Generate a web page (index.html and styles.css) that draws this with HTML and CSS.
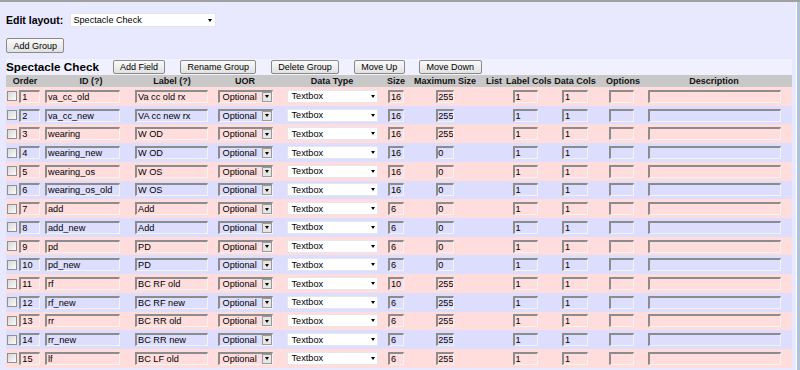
FILE: index.html
```html
<!DOCTYPE html>
<html>
<head>
<meta charset="utf-8">
<title>Edit layout</title>
<link rel="stylesheet" href="styles.css">
</head>
<body>
<div class="page">
  <div class="layout-row">
    <span class="layout-label">Edit layout:</span>
    <div class="top-select">Spectacle Check<span class="caret"></span></div>
  </div>
  <div class="add-group-row"><button class="btn">Add Group</button></div>
  <div class="group-bar">
    <span class="group-title">Spectacle Check</span>
    <button class="btn first">Add Field</button>
    <button class="btn">Rename Group</button>
    <button class="btn">Delete Group</button>
    <button class="btn">Move Up</button>
    <button class="btn">Move Down</button>
  </div>
  <table class="fields">
    <colgroup>
      <col class="c-order"><col class="c-id"><col class="c-label"><col class="c-uor"><col class="c-type"><col class="c-size"><col class="c-max"><col class="c-list"><col class="c-lc"><col class="c-dc"><col class="c-opt"><col class="c-desc">
    </colgroup>
    <thead>
      <tr><th>Order</th><th class="h-id">ID (?)</th><th>Label (?)</th><th>UOR</th><th>Data Type</th><th>Size</th><th>Maximum Size</th><th>List</th><th>Label Cols</th><th>Data Cols</th><th>Options</th><th>Description</th></tr>
    </thead>
    <tbody>
      <tr><td><div class="ord"><input type="checkbox" class="chk"><input class="in w-order" value="1"></div></td><td class="left"><input class="in w-id" value="va_cc_old"></td><td class="left"><input class="in w-label" value="Va cc old rx"></td><td><div class="uor">Optional<span class="abtn"></span></div></td><td><div class="dtype">Textbox<span class="caret"></span></div></td><td><input class="in w-size" value="16"></td><td><input class="in w-max" value="255"></td><td></td><td><input class="in w-lc" value="1"></td><td><input class="in w-dc" value="1"></td><td><input class="in w-opt" value=""></td><td><input class="in w-desc" value=""></td></tr>
      <tr><td><div class="ord"><input type="checkbox" class="chk"><input class="in w-order" value="2"></div></td><td class="left"><input class="in w-id" value="va_cc_new"></td><td class="left"><input class="in w-label" value="VA cc new rx"></td><td><div class="uor">Optional<span class="abtn"></span></div></td><td><div class="dtype">Textbox<span class="caret"></span></div></td><td><input class="in w-size" value="16"></td><td><input class="in w-max" value="255"></td><td></td><td><input class="in w-lc" value="1"></td><td><input class="in w-dc" value="1"></td><td><input class="in w-opt" value=""></td><td><input class="in w-desc" value=""></td></tr>
      <tr><td><div class="ord"><input type="checkbox" class="chk"><input class="in w-order" value="3"></div></td><td class="left"><input class="in w-id" value="wearing"></td><td class="left"><input class="in w-label" value="W OD"></td><td><div class="uor">Optional<span class="abtn"></span></div></td><td><div class="dtype">Textbox<span class="caret"></span></div></td><td><input class="in w-size" value="16"></td><td><input class="in w-max" value="255"></td><td></td><td><input class="in w-lc" value="1"></td><td><input class="in w-dc" value="1"></td><td><input class="in w-opt" value=""></td><td><input class="in w-desc" value=""></td></tr>
      <tr><td><div class="ord"><input type="checkbox" class="chk"><input class="in w-order" value="4"></div></td><td class="left"><input class="in w-id" value="wearing_new"></td><td class="left"><input class="in w-label" value="W OD"></td><td><div class="uor">Optional<span class="abtn"></span></div></td><td><div class="dtype">Textbox<span class="caret"></span></div></td><td><input class="in w-size" value="16"></td><td><input class="in w-max" value="0"></td><td></td><td><input class="in w-lc" value="1"></td><td><input class="in w-dc" value="1"></td><td><input class="in w-opt" value=""></td><td><input class="in w-desc" value=""></td></tr>
      <tr><td><div class="ord"><input type="checkbox" class="chk"><input class="in w-order" value="5"></div></td><td class="left"><input class="in w-id" value="wearing_os"></td><td class="left"><input class="in w-label" value="W OS"></td><td><div class="uor">Optional<span class="abtn"></span></div></td><td><div class="dtype">Textbox<span class="caret"></span></div></td><td><input class="in w-size" value="16"></td><td><input class="in w-max" value="0"></td><td></td><td><input class="in w-lc" value="1"></td><td><input class="in w-dc" value="1"></td><td><input class="in w-opt" value=""></td><td><input class="in w-desc" value=""></td></tr>
      <tr><td><div class="ord"><input type="checkbox" class="chk"><input class="in w-order" value="6"></div></td><td class="left"><input class="in w-id" value="wearing_os_old"></td><td class="left"><input class="in w-label" value="W OS"></td><td><div class="uor">Optional<span class="abtn"></span></div></td><td><div class="dtype">Textbox<span class="caret"></span></div></td><td><input class="in w-size" value="16"></td><td><input class="in w-max" value="0"></td><td></td><td><input class="in w-lc" value="1"></td><td><input class="in w-dc" value="1"></td><td><input class="in w-opt" value=""></td><td><input class="in w-desc" value=""></td></tr>
      <tr><td><div class="ord"><input type="checkbox" class="chk"><input class="in w-order" value="7"></div></td><td class="left"><input class="in w-id" value="add"></td><td class="left"><input class="in w-label" value="Add"></td><td><div class="uor">Optional<span class="abtn"></span></div></td><td><div class="dtype">Textbox<span class="caret"></span></div></td><td><input class="in w-size" value="6"></td><td><input class="in w-max" value="0"></td><td></td><td><input class="in w-lc" value="1"></td><td><input class="in w-dc" value="1"></td><td><input class="in w-opt" value=""></td><td><input class="in w-desc" value=""></td></tr>
      <tr><td><div class="ord"><input type="checkbox" class="chk"><input class="in w-order" value="8"></div></td><td class="left"><input class="in w-id" value="add_new"></td><td class="left"><input class="in w-label" value="Add"></td><td><div class="uor">Optional<span class="abtn"></span></div></td><td><div class="dtype">Textbox<span class="caret"></span></div></td><td><input class="in w-size" value="6"></td><td><input class="in w-max" value="0"></td><td></td><td><input class="in w-lc" value="1"></td><td><input class="in w-dc" value="1"></td><td><input class="in w-opt" value=""></td><td><input class="in w-desc" value=""></td></tr>
      <tr><td><div class="ord"><input type="checkbox" class="chk"><input class="in w-order" value="9"></div></td><td class="left"><input class="in w-id" value="pd"></td><td class="left"><input class="in w-label" value="PD"></td><td><div class="uor">Optional<span class="abtn"></span></div></td><td><div class="dtype">Textbox<span class="caret"></span></div></td><td><input class="in w-size" value="6"></td><td><input class="in w-max" value="0"></td><td></td><td><input class="in w-lc" value="1"></td><td><input class="in w-dc" value="1"></td><td><input class="in w-opt" value=""></td><td><input class="in w-desc" value=""></td></tr>
      <tr><td><div class="ord"><input type="checkbox" class="chk"><input class="in w-order" value="10"></div></td><td class="left"><input class="in w-id" value="pd_new"></td><td class="left"><input class="in w-label" value="PD"></td><td><div class="uor">Optional<span class="abtn"></span></div></td><td><div class="dtype">Textbox<span class="caret"></span></div></td><td><input class="in w-size" value="6"></td><td><input class="in w-max" value="0"></td><td></td><td><input class="in w-lc" value="1"></td><td><input class="in w-dc" value="1"></td><td><input class="in w-opt" value=""></td><td><input class="in w-desc" value=""></td></tr>
      <tr><td><div class="ord"><input type="checkbox" class="chk"><input class="in w-order" value="11"></div></td><td class="left"><input class="in w-id" value="rf"></td><td class="left"><input class="in w-label" value="BC RF old"></td><td><div class="uor">Optional<span class="abtn"></span></div></td><td><div class="dtype">Textbox<span class="caret"></span></div></td><td><input class="in w-size" value="10"></td><td><input class="in w-max" value="255"></td><td></td><td><input class="in w-lc" value="1"></td><td><input class="in w-dc" value="1"></td><td><input class="in w-opt" value=""></td><td><input class="in w-desc" value=""></td></tr>
      <tr><td><div class="ord"><input type="checkbox" class="chk"><input class="in w-order" value="12"></div></td><td class="left"><input class="in w-id" value="rf_new"></td><td class="left"><input class="in w-label" value="BC RF new"></td><td><div class="uor">Optional<span class="abtn"></span></div></td><td><div class="dtype">Textbox<span class="caret"></span></div></td><td><input class="in w-size" value="6"></td><td><input class="in w-max" value="255"></td><td></td><td><input class="in w-lc" value="1"></td><td><input class="in w-dc" value="1"></td><td><input class="in w-opt" value=""></td><td><input class="in w-desc" value=""></td></tr>
      <tr><td><div class="ord"><input type="checkbox" class="chk"><input class="in w-order" value="13"></div></td><td class="left"><input class="in w-id" value="rr"></td><td class="left"><input class="in w-label" value="BC RR old"></td><td><div class="uor">Optional<span class="abtn"></span></div></td><td><div class="dtype">Textbox<span class="caret"></span></div></td><td><input class="in w-size" value="6"></td><td><input class="in w-max" value="255"></td><td></td><td><input class="in w-lc" value="1"></td><td><input class="in w-dc" value="1"></td><td><input class="in w-opt" value=""></td><td><input class="in w-desc" value=""></td></tr>
      <tr><td><div class="ord"><input type="checkbox" class="chk"><input class="in w-order" value="14"></div></td><td class="left"><input class="in w-id" value="rr_new"></td><td class="left"><input class="in w-label" value="BC RR new"></td><td><div class="uor">Optional<span class="abtn"></span></div></td><td><div class="dtype">Textbox<span class="caret"></span></div></td><td><input class="in w-size" value="6"></td><td><input class="in w-max" value="255"></td><td></td><td><input class="in w-lc" value="1"></td><td><input class="in w-dc" value="1"></td><td><input class="in w-opt" value=""></td><td><input class="in w-desc" value=""></td></tr>
      <tr><td><div class="ord"><input type="checkbox" class="chk"><input class="in w-order" value="15"></div></td><td class="left"><input class="in w-id" value="lf"></td><td class="left"><input class="in w-label" value="BC LF old"></td><td><div class="uor">Optional<span class="abtn"></span></div></td><td><div class="dtype">Textbox<span class="caret"></span></div></td><td><input class="in w-size" value="6"></td><td><input class="in w-max" value="255"></td><td></td><td><input class="in w-lc" value="1"></td><td><input class="in w-dc" value="1"></td><td><input class="in w-opt" value=""></td><td><input class="in w-desc" value=""></td></tr>
    </tbody>
  </table>
</div>
<div class="edge"></div>
</body>
</html>
```
FILE: styles.css
```css
html, body {
  margin: 0;
  height: 100%;
}
body {
  box-sizing: border-box;
  display: flex;
  background: #e8e8fe;
  border-top: 2px solid #a0a0a0;
  overflow: hidden;
  font-family: "Liberation Sans", Arial, sans-serif;
  color: #000;
}
.page {
  flex: 1;
  padding-left: 6px;
}
.edge {
  width: 3px;
  border-left: 1px solid #ffffff;
  background: #aec2dc;
}

/* top selector */
.layout-row {
  display: flex;
  align-items: center;
  height: 14px;
  margin-top: 11px;
}
.layout-label {
  font-weight: bold;
  font-size: 10.5px;
  width: 63.5px;
}
.top-select {
  box-sizing: border-box;
  display: flex;
  align-items: center;
  width: 146px;
  height: 14px;
  background: #fff;
  border: 1px solid #e4e4f0;
  font-size: 9.1px;
  padding-left: 3px;
}
.caret {
  margin-left: auto;
  margin-right: 3px;
  width: 0;
  height: 0;
  border-left: 2.5px solid transparent;
  border-right: 2.5px solid transparent;
  border-top: 3px solid #000;
}

/* buttons */
.btn {
  box-sizing: border-box;
  height: 15px;
  margin: 0;
  padding: 0 6.4px;
  font-family: "Liberation Sans", Arial, sans-serif;
  font-size: 9px;
  color: #000;
  line-height: 12px;
  border: 1px solid #8a8a8a;
  border-radius: 2px;
  background: linear-gradient(#fafafa, #e2e2e2);
}
.add-group-row {
  margin-top: 11px;
  height: 15px;
  display: flex;
}

/* group bar */
.group-bar {
  display: flex;
  align-items: center;
  width: 786px;
  height: 16px;
  margin-top: 6px;
  background: #f0f0fe;
}
.group-bar .btn {
  height: 14px;
  margin-left: 14.6px;
}
.group-bar .btn.first {
  margin-left: 13.7px;
}
.group-title {
  font-weight: bold;
  font-size: 11.7px;
  line-height: 14px;
}

/* table */
.fields {
  width: 786px;
  table-layout: fixed;
  border-collapse: collapse;
  border-spacing: 0;
}
.c-order { width: 38px; }
.c-id { width: 90px; }
.c-label { width: 76px; }
.c-uor { width: 70px; }
.c-type { width: 104px; }
.c-size { width: 24px; }
.c-max { width: 74px; }
.c-list { width: 24px; }
.c-lc { width: 38px; }
.c-dc { width: 62px; }
.c-opt { width: 30px; }
.c-desc { width: 156px; }

.fields thead tr {
  height: 12px;
}
.fields th {
  padding: 0;
  background: #c8c8c8;
  font-size: 9px;
  font-weight: bold;
  line-height: 12px;
  white-space: nowrap;
  color: #111;
}
.fields th.h-id {
  padding-left: 4px;
}
.fields tbody tr {
  height: 18.72px;
}
.fields td {
  padding: 0;
  vertical-align: middle;
}
.fields tbody tr:nth-child(odd) { background: #ffdddd; }
.fields tbody tr:nth-child(even) { background: #ddddfe; }

.in {
  display: block;
  box-sizing: border-box;
  height: 13px;
  margin: 0 auto;
  padding: 0 0 0 1px;
  font-family: "Liberation Sans", Arial, sans-serif;
  font-size: 9.2px;
  line-height: 10px;
  color: #000;
  background: transparent;
  border-style: solid;
  border-width: 2px 1px 1px 2px;
  border-color: #8c8c8c #f4f4f4 #f4f4f4 #8c8c8c;
  outline: none;
}
.left .in { margin: 0 0 0 1px; }
.w-order { width: 21px; }
.w-id { width: 75px; }
.w-label { width: 73px; }
.w-size { width: 16px; }
.w-max { width: 18.5px; padding-left: 0.5px; }
.w-lc { width: 25px; }
.w-dc { width: 26px; }
.w-opt { width: 25px; }
.w-desc { width: 133px; }

.ord {
  display: flex;
  align-items: center;
  padding-left: 1.3px;
}
.ord .w-order {
  margin: 0;
}
.chk {
  appearance: none;
  -webkit-appearance: none;
  box-sizing: border-box;
  flex: none;
  width: 10px;
  height: 10px;
  margin: 0 2px 0 0;
  border: 1px solid #8e8f8f;
  background: linear-gradient(135deg, #d8d8d8, #fbfbfb);
}

.uor {
  box-sizing: border-box;
  display: flex;
  align-items: center;
  width: 55px;
  height: 13px;
  margin: 0 auto;
  padding-left: 3px;
  font-size: 9.2px;
  border-style: solid;
  border-width: 2px 1px 1px 2px;
  border-color: #8c8c8c #f4f4f4 #f4f4f4 #8c8c8c;
}
.abtn {
  box-sizing: border-box;
  display: flex;
  align-items: center;
  justify-content: center;
  width: 10px;
  height: 10px;
  margin-left: auto;
  background: #e6e6e6;
  border: 1px solid #9a9a9a;
}
.abtn::after {
  content: "";
  width: 0;
  height: 0;
  border-left: 2.5px solid transparent;
  border-right: 2.5px solid transparent;
  border-top: 3px solid #000;
}

.dtype {
  box-sizing: border-box;
  display: flex;
  align-items: center;
  width: 91px;
  height: 13px;
  margin: 0 auto;
  padding-left: 4px;
  font-size: 9.2px;
  background: #fff;
  border: 1px solid #e6e6ee;
}
.dtype .caret {
  margin-right: 2px;
}
```
